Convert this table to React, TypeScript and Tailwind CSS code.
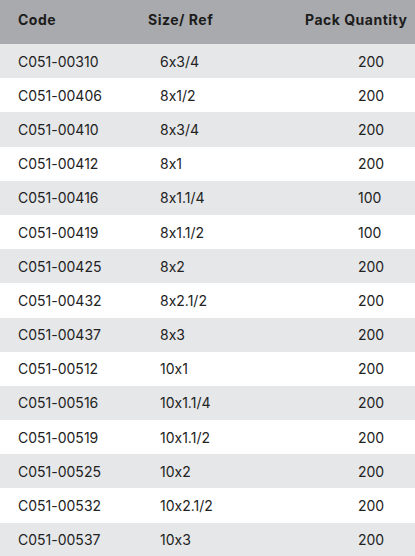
const rows: [string, string, string][] = [
  ["C051-00310", "6x3/4", "200"],
  ["C051-00406", "8x1/2", "200"],
  ["C051-00410", "8x3/4", "200"],
  ["C051-00412", "8x1", "200"],
  ["C051-00416", "8x1.1/4", "100"],
  ["C051-00419", "8x1.1/2", "100"],
  ["C051-00425", "8x2", "200"],
  ["C051-00432", "8x2.1/2", "200"],
  ["C051-00437", "8x3", "200"],
  ["C051-00512", "10x1", "200"],
  ["C051-00516", "10x1.1/4", "200"],
  ["C051-00519", "10x1.1/2", "200"],
  ["C051-00525", "10x2", "200"],
  ["C051-00532", "10x2.1/2", "200"],
  ["C051-00537", "10x3", "200"],
];

export default function App() {
  return (
    <div
      className="w-[415px] h-[556px] overflow-hidden bg-white text-[14px] text-[#222222] [font-feature-settings:'calt'_0]"
      style={{ fontFamily: "Inter, Roboto, sans-serif" }}
    >
      <div className="flex h-[44px] items-center bg-[#a9aaad] pb-[6px] font-bold tracking-[0.5px] text-[#1c1c1c]">
        <div className="w-[148px] pl-[18px]">Code</div>
        <div className="w-[157px]">Size/ Ref</div>
        <div>Pack Quantity</div>
      </div>
      {rows.map(([code, size, qty], i) => (
        <div
          key={code}
          className={`flex h-[34.2px] items-center ${i % 2 === 0 ? "bg-[#e6e7e9]" : "bg-white"}`}
        >
          <div className="w-[160px] pl-[18px]">{code}</div>
          <div className="w-[198px]">{size}</div>
          <div>{qty}</div>
        </div>
      ))}
    </div>
  );
}
